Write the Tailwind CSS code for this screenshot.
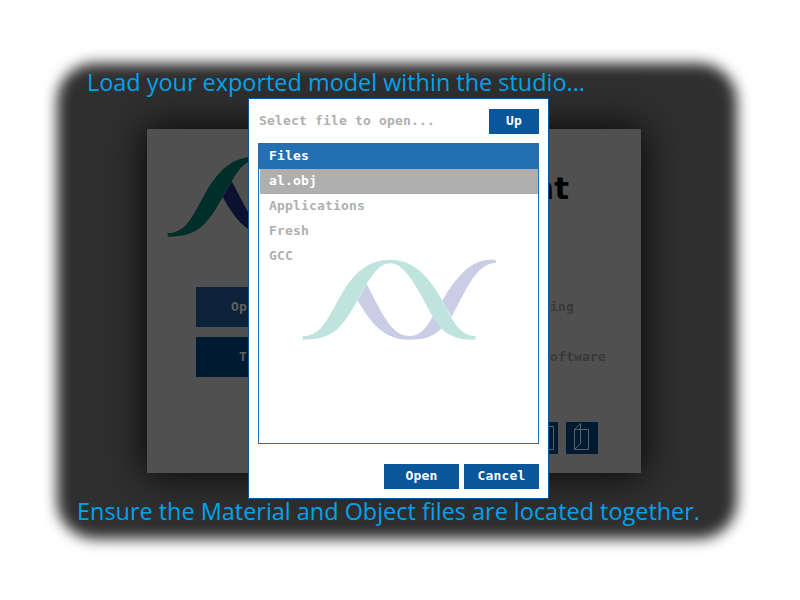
<!DOCTYPE html>
<html lang="en">
<head>
<meta charset="utf-8">
<title>Open model</title>
<script src="https://cdn.jsdelivr.net/npm/@tailwindcss/browser@4"></script>
</head>
<body class="relative w-[800px] h-[600px] overflow-hidden bg-white font-['DejaVu_Sans_Mono',monospace] text-[13px] tracking-[0.17px] font-bold">
<svg class="hidden">
  <defs>
    <path id="wave-back" d="M230 118C270 190 300 273 357 273C390 273 408 250 428 215L455 250C425 280 395 284 357 284C280 284 240 232 203 165ZM457 167C500 92 545 44 600 44H617V54C560 54 528 135 485 215Z"/>
    <path id="wave-front" d="M38 273C90 273 109 230 150 155C190 84 233 44 300 44C372 44 417 95 457 167C485 215 504 273 557 273V284C493 284 459 268 428 215C388 143 349 55 300 55C262 55 237 105 203 165C156 250 128 284 38 284Z"/>
  </defs>
</svg>

<!-- Soft-edged backdrop -->
<div class="absolute left-[57px] top-[63px] w-[680px] h-[476px] rounded-[38px] bg-[#2f2f2f] blur-[7px]"></div>

<!-- Dimmed start window -->
<main class="absolute left-[147px] top-[129px] w-[494px] h-[344px] bg-[#505050] shadow-[0_0_36px_2px_rgba(0,0,0,0.85)] flex flex-col">
  <header class="h-[158px] flex justify-between pl-[8px] pr-[72px]">
    <svg class="mt-[13px] w-[220px] h-[110px]" viewBox="0 0 660 330"><use href="#wave-back" fill="#0d1130"/><use href="#wave-front" fill="#002e28"/></svg>
    <div class="mt-[39px] text-black text-[31px] leading-[40px] tracking-normal font-['DejaVu_Sans',sans-serif]">nt</div>
  </header>
  <section class="flex justify-between pl-[49px] pr-[35px]">
    <div class="flex flex-col gap-[10px] text-[#606060]">
      <div class="w-[130px] h-[40px] bg-[#0b2238] pl-[35px] leading-[40px]">Op</div>
      <div class="w-[130px] h-[40px] bg-[#001a32] pl-[43px] leading-[40px]">T</div>
    </div>
    <div class="flex flex-col gap-[10px] text-[#393939] w-[56px]">
      <div class="h-[40px] leading-[40px]">ing</div>
      <div class="h-[40px] leading-[40px]">oftware</div>
    </div>
  </section>
  <footer class="mt-[45px] pr-[43px] flex justify-end gap-[8px]">
    <svg class="w-[32px] h-[32px] bg-[#001a32]" viewBox="0 0 32 32" fill="none" stroke="#59636b"><path d="M6.500 4.500H27.500V27.500H6.500Z"/></svg>
    <svg class="w-[32px] h-[32px] bg-[#001a32]" viewBox="0 0 32 32" fill="none" stroke="#59636b"><path d="M8.500 7.500H22.500V27.500H8.500ZM8.500 7.500L14.500 1.500V21.500L8.500 27.500"/></svg>
  </footer>
</main>

<!-- Captions -->
<svg class="absolute left-0 top-[60px] w-[800px] h-[40px] font-['Open_Sans',sans-serif] font-normal tracking-normal" fill="#00a2ed"><text x="87" y="31" font-size="24.500" textLength="498" lengthAdjust="spacingAndGlyphs">Load your exported model within the studio...</text></svg>
<svg class="absolute left-0 top-[490px] w-[800px] h-[40px] font-['Open_Sans',sans-serif] font-normal tracking-normal" fill="#00a2ed"><text x="77" y="30" font-size="24.500" textLength="623" lengthAdjust="spacingAndGlyphs">Ensure the Material and Object files are located together.</text></svg>

<!-- File dialog -->
<div class="absolute left-[248px] top-[98px] w-[301px] h-[401px] bg-white border border-[#0a589b] px-[9px] pt-[10px] flex flex-col text-[#afafaf]">
  <div class="flex justify-between h-[25px] leading-[24px]">
    <span class="pl-[1px]">Select file to open...</span>
    <button class="w-[50px] h-[25px] pb-[1px] bg-[#0a569b] text-white">Up</button>
  </div>
  <div class="mt-[9px] w-[281px] h-[301px] border border-[#236fb2] relative leading-[23px]">
    <svg class="absolute left-[31px] top-[101px] w-[220px] h-[110px]" viewBox="0 0 660 330"><use href="#wave-back" fill="#c9cde6"/><use href="#wave-front" fill="#bfe4dd"/></svg>
    <div class="h-[25px] bg-[#236fb2] text-white pl-[10px]">Files</div>
    <div class="h-[25px] ml-[1px] bg-[#afafaf] text-white pl-[9px]">al.obj</div>
    <div class="h-[25px] pl-[10px]">Applications</div>
    <div class="h-[25px] pl-[10px]">Fresh</div>
    <div class="h-[25px] pl-[10px]">GCC</div>
  </div>
  <div class="mt-[20px] flex justify-end gap-[5px] text-white">
    <button class="w-[75px] h-[25px] pb-[1px] bg-[#0a569b]">Open</button>
    <button class="w-[75px] h-[25px] pb-[1px] bg-[#0a569b]">Cancel</button>
  </div>
</div>
</body>
</html>
